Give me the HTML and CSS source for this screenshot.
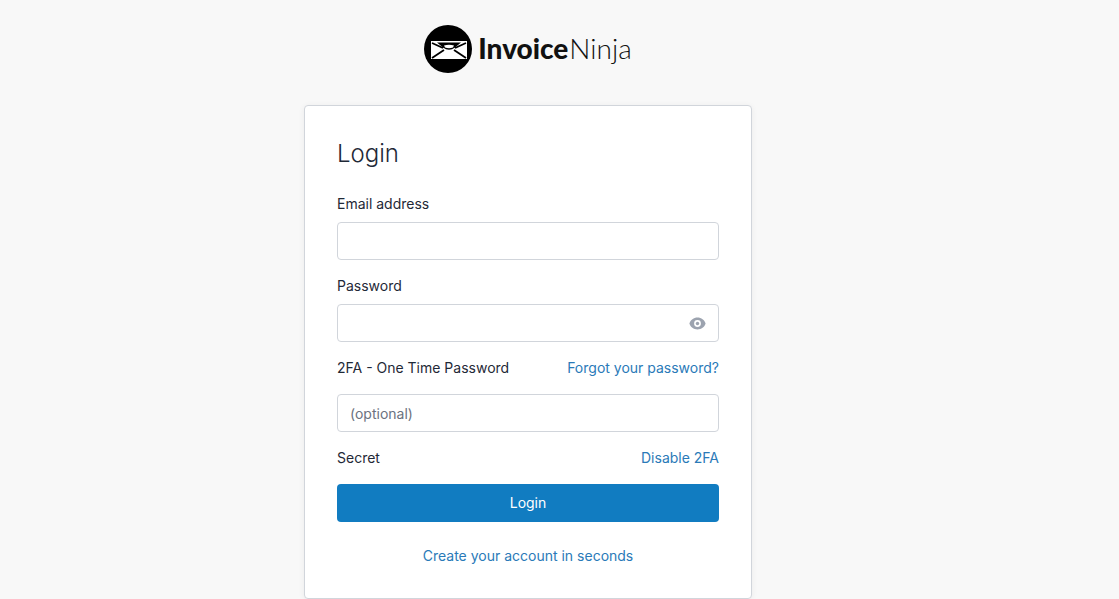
FILE: index.html
```html
<!DOCTYPE html>
<html lang="en">
<head>
    <meta charset="UTF-8">
    <meta name="viewport" content="width=device-width, initial-scale=1.0">
    <title>Login - Invoice Ninja</title>
    <link rel="stylesheet" href="styles.css">
</head>
<body>

<div class="page">
    <header class="logo">
        <svg class="logo-mark" width="48" height="48" viewBox="0 0 48 48">
            <circle cx="24" cy="24" r="24" fill="#000"/>
            <rect x="7" y="16" width="36" height="18" fill="#fff"/>
            <path d="M8 18 L19 23 M42 18 L31 23 M8 33 L20 25 M42 33 L30 25" stroke="#000" stroke-width="1.8" fill="none"/>
            <path d="M13 17.500 H37 L31 22.500 Q25 27 19 22.500 Z" fill="#000"/>
            <path d="M20 20.500 Q25 19 30 20.500 L29 22.500 Q25 24 21 22.500 Z" fill="#fff"/>
        </svg>
        <span class="logo-text"><b>Invoice</b>Ninja</span>
    </header>

    <main class="card">
        <h1>Login</h1>

        <form>
            <div class="field">
                <div class="label-row"><label for="email">Email address</label></div>
                <input type="email" id="email">
            </div>

            <div class="field">
                <div class="label-row"><label for="password">Password</label></div>
                <div class="input-wrap">
                    <input type="password" id="password">
                    <svg class="eye" width="17" height="17" viewBox="0 0 20 20" fill="#9ca3af">
                        <path d="M10 12a2 2 0 100-4 2 2 0 000 4z"/>
                        <path fill-rule="evenodd" clip-rule="evenodd" d="M.458 10C1.732 5.943 5.522 3 10 3s8.268 2.943 9.542 7c-1.274 4.057-5.064 7-9.542 7S1.732 14.057.458 10zM14 10a4 4 0 11-8 0 4 4 0 018 0z"/>
                    </svg>
                </div>
            </div>

            <div class="field">
                <div class="label-row label-row-wide">
                    <label for="otp">2FA - One Time Password</label>
                    <a href="#">Forgot your password?</a>
                </div>
                <input type="text" id="otp" placeholder="(optional)">
            </div>

            <div class="label-row label-row-wide">
                <span class="label">Secret</span>
                <a href="#">Disable 2FA</a>
            </div>

            <button type="button" class="login-btn">Login</button>
        </form>

        <p class="signup"><a href="#">Create your account in seconds</a></p>
    </main>
</div>

</body>
</html>
```

FILE: styles.css
```css
* {
    box-sizing: border-box;
}

body {
    margin: 0;
    background-color: #f8f8f8;
    color: #1f2937;
    font-family: Inter, "Liberation Sans", sans-serif;
    font-size: 14px;
    line-height: 20px;
}

.page {
    width: 1056px;
    display: flex;
    flex-direction: column;
    align-items: center;
}

.logo {
    display: flex;
    align-items: center;
    height: 48px;
    margin-top: 25px;
}

.logo-text {
    margin-left: 6px;
    padding-bottom: 2px;
    font-family: Lato, sans-serif;
    font-size: 28px;
    font-weight: 300;
    line-height: 46px;
    color: #111;
}

.logo-text b {
    font-weight: 900;
    margin-right: 1px;
}

.card {
    width: 448px;
    margin-top: 32px;
    padding: 32px;
    background-color: white;
    border: 1px solid #d1d5db;
    border-radius: 4px;
    box-shadow: 0 1px 6px rgba(0, 0, 0, 0.06);
}

h1 {
    margin: 0 0 24px;
    font-size: 24px;
    font-weight: 300;
    line-height: 32px;
}

.field {
    margin-bottom: 16px;
}

.label-row {
    display: flex;
    justify-content: space-between;
    margin-bottom: 8px;
}

.label-row-wide {
    margin-bottom: 16px;
}

label,
.label {
    font-weight: 400;
}

a {
    color: #2a7ab8;
    text-decoration: none;
}

input {
    display: block;
    width: 100%;
    height: 38px;
    padding: 0 12px;
    border: 1px solid #d1d5db;
    border-radius: 4px;
    background-color: white;
    font: inherit;
    color: inherit;
}

input::placeholder {
    color: #6b7280;
}

.input-wrap {
    position: relative;
}

.eye {
    position: absolute;
    right: 13px;
    top: 11px;
}

.login-btn {
    display: block;
    width: 100%;
    height: 38px;
    border: none;
    border-radius: 4px;
    background-color: #117cc1;
    color: white;
    font: inherit;
}

.signup {
    margin: 24px 0 0;
    text-align: center;
}
```
